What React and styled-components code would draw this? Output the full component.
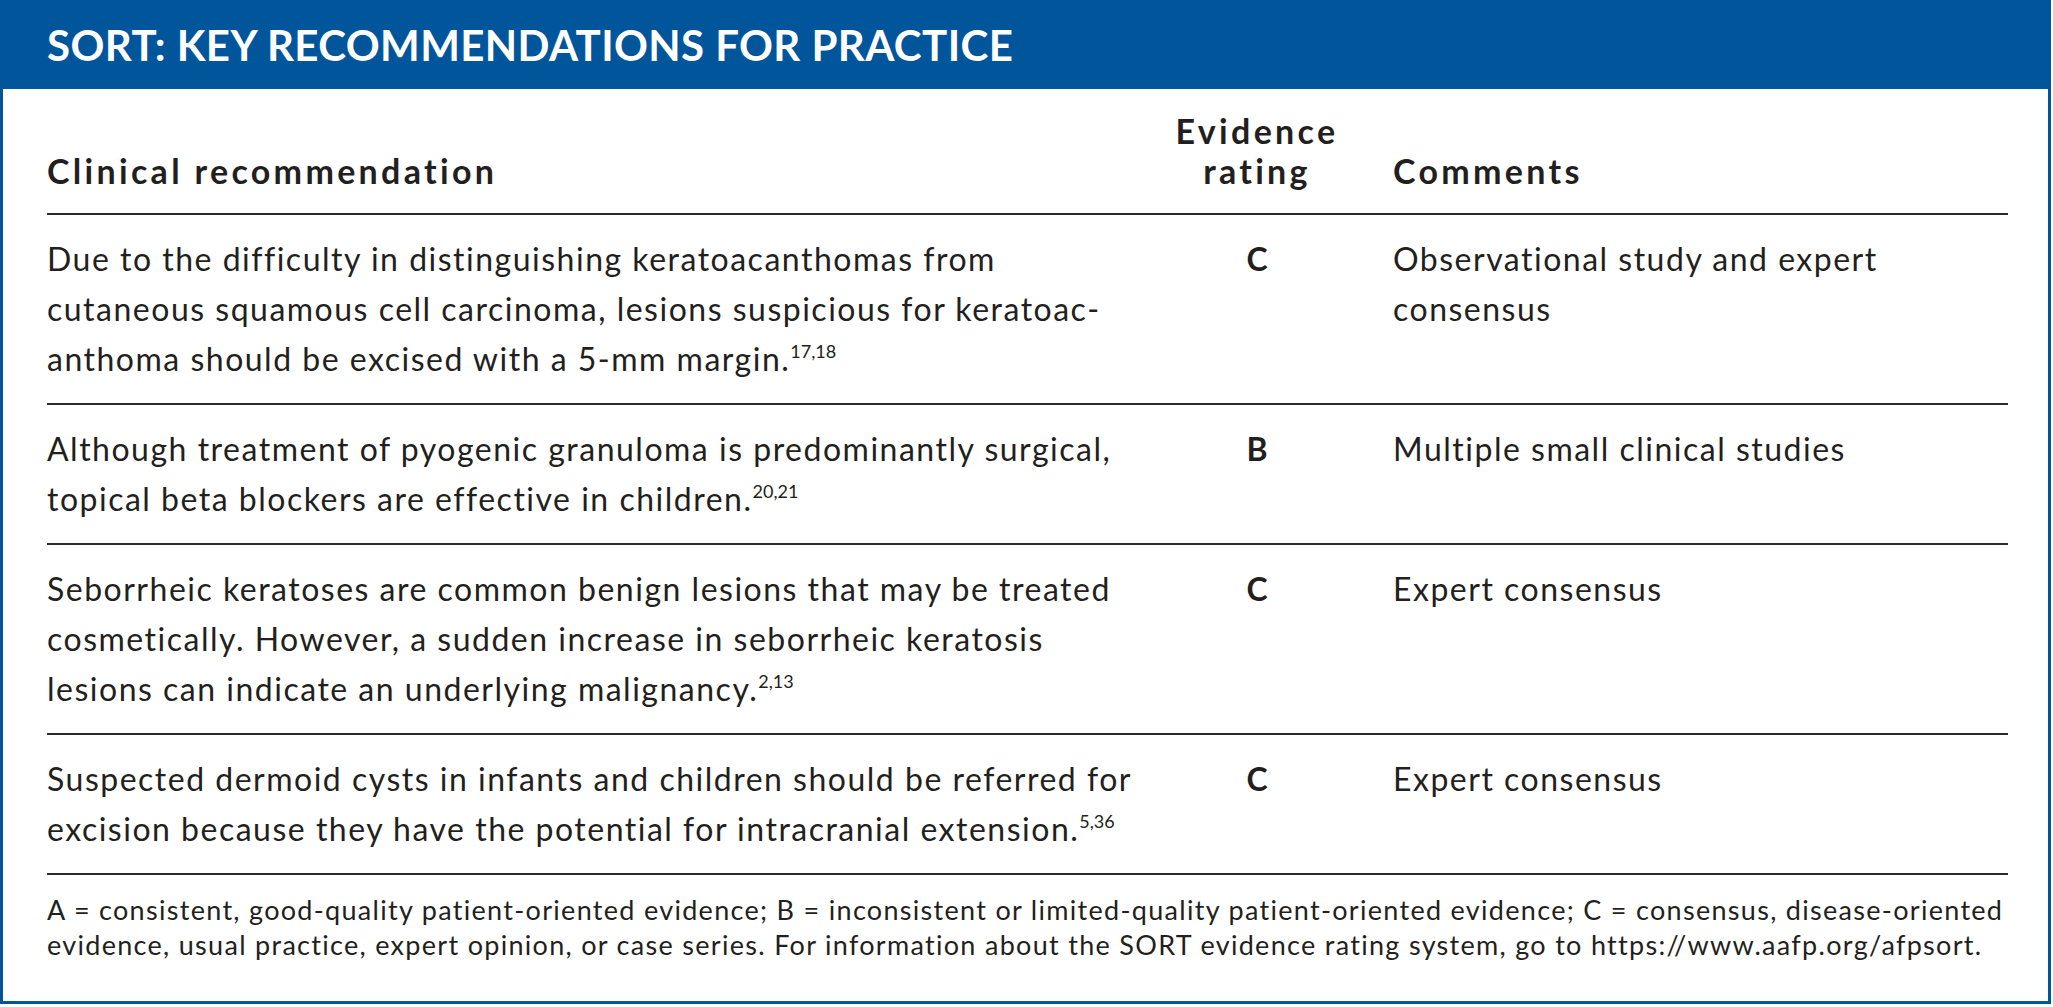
import React from 'react';
import styled, { createGlobalStyle } from 'styled-components';

const GlobalStyle = createGlobalStyle`
  body {
    margin: 0;
    background: #ffffff;
    font-family: Lato, "Open Sans", sans-serif;
    color: #231f20;
  }
`;

const BLUE = '#00559b';

const Panel = styled.section`
  width: 2051px;
  box-sizing: border-box;
  border: 3px solid ${BLUE};
  background: #fff;
`;

const Banner = styled.header`
  height: 86px;
  background: ${BLUE};
  display: flex;
  align-items: center;
  padding-left: 44px;
  padding-bottom: 3px;
  box-sizing: border-box;
`;

const Title = styled.h1`
  margin: 0;
  font-family: Lato, sans-serif;
  font-weight: 700;
  font-size: 42px;
  color: #fff;
  letter-spacing: 0.4px;
  white-space: nowrap;
`;

const Body = styled.div`
  padding: 0 40px 39px 44px;
`;

const Row = styled.div`
  display: grid;
  grid-template-columns: 1113px 194px 1fr;
  align-items: ${(p) => (p.$head ? 'end' : 'start')};
  border-bottom: 2px solid #2b2b2b;
  padding: ${(p) => (p.$head ? '22px 0 22px' : '19px 0 19px')};
`;

const HeadCell = styled.div`
  font-weight: 700;
  font-size: 34px;
  line-height: 40px;
  letter-spacing: 3.3px;
  white-space: nowrap;
  text-align: ${(p) => (p.$center ? 'center' : 'left')};
  padding-left: ${(p) => (p.$indent ? '39px' : '0')};
`;

const Cell = styled.div`
  font-size: 32px;
  line-height: 50px;
  letter-spacing: 1.5px;
  white-space: nowrap;
  padding-left: ${(p) => (p.$indent ? '39px' : '0')};
`;

const Rating = styled(Cell)`
  font-weight: 700;
  text-align: center;
  letter-spacing: 0;
`;

const Sup = styled.sup`
  font-size: 18px;
  line-height: 0;
  letter-spacing: 0;
  vertical-align: 13px;
`;

const Footnote = styled.p`
  margin: 0;
  padding-top: 17px;
  font-size: 27px;
  line-height: 35px;
  letter-spacing: 1.3px;
  white-space: nowrap;
`;

const rows = [
  {
    text: [
      'Due to the difficulty in distinguishing keratoacanthomas from',
      'cutaneous squamous cell carcinoma, lesions suspicious for keratoac-',
      'anthoma should be excised with a 5-mm margin.',
    ],
    refs: '17,18',
    rating: 'C',
    comment: ['Observational study and expert', 'consensus'],
  },
  {
    text: [
      'Although treatment of pyogenic granuloma is predominantly surgical,',
      'topical beta blockers are effective in children.',
    ],
    refs: '20,21',
    rating: 'B',
    comment: ['Multiple small clinical studies'],
  },
  {
    text: [
      'Seborrheic keratoses are common benign lesions that may be treated',
      'cosmetically. However, a sudden increase in seborrheic keratosis',
      'lesions can indicate an underlying malignancy.',
    ],
    refs: '2,13',
    rating: 'C',
    comment: ['Expert consensus'],
  },
  {
    text: [
      'Suspected dermoid cysts in infants and children should be referred for',
      'excision because they have the potential for intracranial extension.',
    ],
    refs: '5,36',
    rating: 'C',
    comment: ['Expert consensus'],
  },
];

const Lines = ({ lines, refs }) =>
  lines.map((line, i) => (
    <React.Fragment key={i}>
      {line}
      {refs && i === lines.length - 1 && <Sup>{refs}</Sup>}
      {i < lines.length - 1 && <br />}
    </React.Fragment>
  ));

export default function App() {
  return (
    <>
      <GlobalStyle />
      <Panel>
        <Banner>
          <Title>SORT: KEY RECOMMENDATIONS FOR PRACTICE</Title>
        </Banner>
        <Body>
          <Row $head>
            <HeadCell>Clinical recommendation</HeadCell>
            <HeadCell $center>
              Evidence
              <br />
              rating
            </HeadCell>
            <HeadCell $indent>Comments</HeadCell>
          </Row>
          {rows.map((r, i) => (
            <Row key={i}>
              <Cell>
                <Lines lines={r.text} refs={r.refs} />
              </Cell>
              <Rating>{r.rating}</Rating>
              <Cell $indent>
                <Lines lines={r.comment} />
              </Cell>
            </Row>
          ))}
          <Footnote>
            A = consistent, good-quality patient-oriented evidence; B = inconsistent or limited-quality patient-oriented evidence; C = consensus, disease-oriented
            <br />
            evidence, usual practice, expert opinion, or case series. For information about the SORT evidence rating system, go to https://www.aafp.org/afpsort.
          </Footnote>
        </Body>
      </Panel>
    </>
  );
}
